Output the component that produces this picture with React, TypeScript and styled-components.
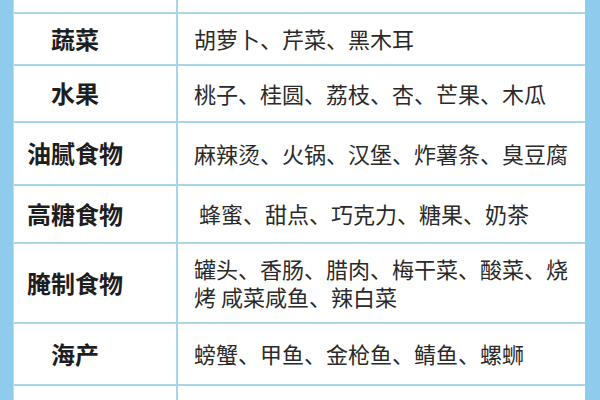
import styled, { createGlobalStyle } from 'styled-components';

const GlobalStyle = createGlobalStyle`
  html, body {
    margin: 0;
    padding: 0;
    width: 600px;
    height: 400px;
    overflow: hidden;
    background: #fff;
  }
  body {
    font-family: "Noto Sans CJK SC", "Noto Sans", sans-serif;
  }
`;

type Row = {
  name: string;
  items: string[];
  height: number;
};

const rows: Row[] = [
  { name: '', items: [''], height: 14 },
  { name: '蔬菜', items: ['胡萝卜、芹菜、黑木耳'], height: 52 },
  { name: '水果', items: ['桃子、桂圆、荔枝、杏、芒果、木瓜'], height: 57 },
  { name: '油腻食物', items: ['麻辣烫、火锅、汉堡、炸薯条、臭豆腐'], height: 63 },
  { name: '高糖食物', items: ['\u00a0蜂蜜、甜点、巧克力、糖果、奶茶'], height: 58 },
  {
    name: '腌制食物',
    items: ['罐头、香肠、腊肉、梅干菜、酸菜、烧', '烤 咸菜咸鱼、辣白菜'],
    height: 80,
  },
  { name: '海产', items: ['螃蟹、甲鱼、金枪鱼、鲭鱼、螺蛳'], height: 62 },
  { name: '调味品', items: ['花椒、胡椒、辣椒、味精、五香粉'], height: 60 },
];

export default function App() {
  return (
    <>
      <GlobalStyle />
      <_Frame>
        <_Table>
          {rows.map((row, i) => (
            <_Row key={i} $height={row.height}>
              <_Name>{row.name}</_Name>
              <_Items>
                {row.items.map((line, j) => (
                  <_Line key={j}>{line}</_Line>
                ))}
              </_Items>
            </_Row>
          ))}
        </_Table>
      </_Frame>
    </>
  );
}

const _Frame = styled.div`
  width: 600px;
  height: 400px;
  box-sizing: border-box;
  padding: 0 15px 0 13px;
  background: #8ecbec;
  overflow: hidden;
`;

const _Table = styled.div`
  background: #fff;
  display: flex;
  flex-direction: column;
  border-left: 1px solid #b9e0f2;
`;

const _Row = styled.div<{ $height: number }>`
  display: grid;
  grid-template-columns: 164px 1fr;
  height: ${(p) => p.$height}px;
  flex-shrink: 0;
  box-sizing: border-box;
  border-bottom: 2px solid #a7d7e6;
`;

const _Name = styled.div`
  display: flex;
  align-items: center;
  justify-content: center;
  padding-right: 40px;
  padding-bottom: 2px;
  border-right: 2px solid #a7d7e6;
  font-size: 24px;
  font-weight: 700;
  color: #1e1e1e;
  white-space: nowrap;
`;

const _Items = styled.div`
  display: flex;
  flex-direction: column;
  justify-content: center;
  padding-left: 16px;
  padding-bottom: 2px;
  font-size: 22px;
  color: #2a2a2a;
  white-space: nowrap;
`;

const _Line = styled.span`
  display: block;
  height: 28px;
  line-height: 28px;
`;
